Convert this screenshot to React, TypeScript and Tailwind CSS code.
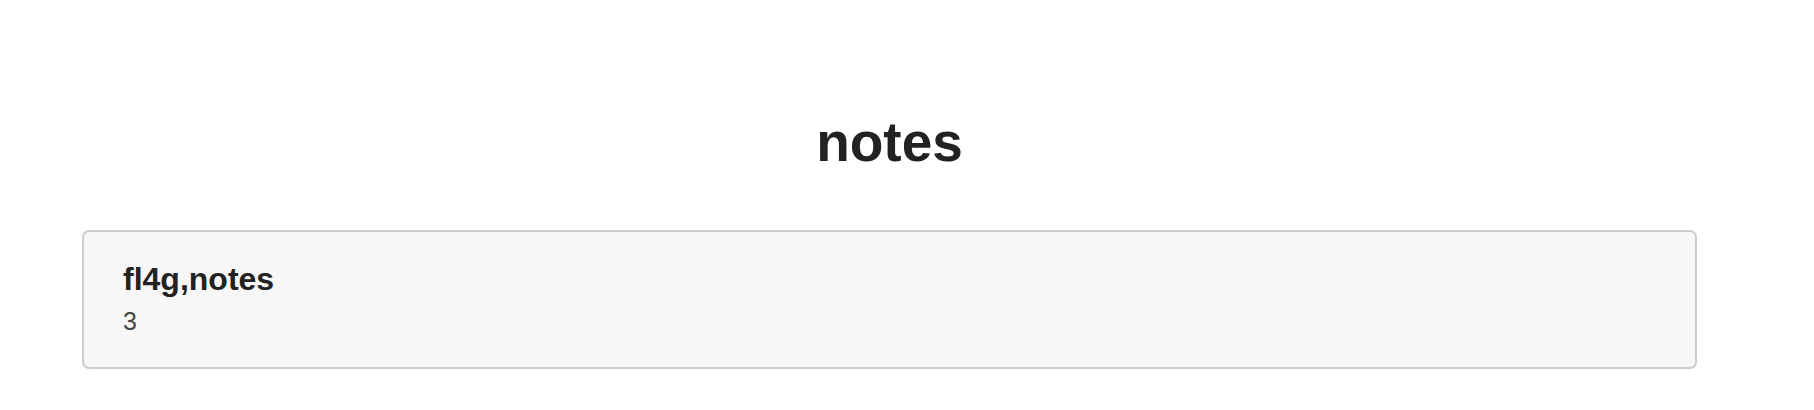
export default function App() {
  return (
    <div className="min-h-[410px] w-full bg-white" style={{ fontFamily: '"Liberation Sans", Arial, sans-serif' }}>
      <div className="ml-[82px] w-[1615px] pt-[115px]">
        {/* 제목 */}
        <h1 className="text-center text-[55px] leading-[55px] font-bold text-[#222]">notes</h1>

        {/* 노트 카드 */}
        <div className="mt-[60px] rounded-[7px] border-2 border-[#ccc] bg-[#f7f7f7] px-[39px] pt-[31px] pb-[33px]">
          <h3 className="text-[32px] leading-[32px] font-bold text-[#222]">fl4g,notes</h3>
          <p className="mt-[14px] text-[25px] leading-[25px] text-[#444]">3</p>
        </div>
      </div>
    </div>
  );
}
